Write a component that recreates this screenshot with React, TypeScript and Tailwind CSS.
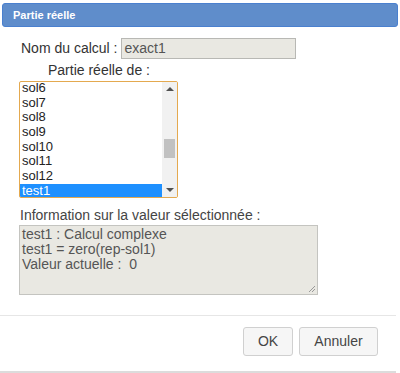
import React from 'react'

const items = ['sol6', 'sol7', 'sol8', 'sol9', 'sol10', 'sol11', 'sol12', 'test1']

const App = () => {
    return (
        <div className="w-[400px] h-[373px] bg-white relative font-['Liberation_Sans',Arial,sans-serif] text-[#333] overflow-hidden">
            <div className="mx-[2px] mt-[3px] h-[24px] rounded-[3px] border border-[#4a80cf] bg-[#5f8dcb] flex items-center px-[10px]">
                <span className="text-white text-[11px] font-bold">Partie réelle</span>
            </div>

            <div className="pl-[21px] pt-[11px] flex items-center text-[14px] text-[#333]">
                <span>Nom du calcul :</span>
                <div className="ml-[4px] w-[175px] h-[21px] bg-[#e9e8e2] border border-[#b8b8b4] flex items-center px-[2px] text-[#555]">exact1</div>
            </div>

            <div className="pl-[48px] mt-[3px] text-[14px] leading-[17px] text-[#333]">Partie réelle de :</div>

            <div className="ml-[19px] mt-[2px] w-[159px] h-[117px] border border-[#e4a94f] rounded-[2px] flex overflow-hidden">
                <div className="flex-1 flex flex-col justify-start -mt-[1px] text-[13px] text-[#222]">
                    {items.map((it, i) => (
                        <div key={i} className={`shrink-0 h-[14.7px] leading-[14.7px] pl-[2px] ${it === 'test1' ? 'bg-[#1e90ff] text-white' : ''}`}>{it}</div>
                    ))}
                </div>
                <div className="w-[15px] bg-[#f1f1f1] relative">
                    <div className="absolute top-[5px] left-[4px] w-0 h-0 border-l-[4px] border-r-[4px] border-b-[4px] border-l-transparent border-r-transparent border-b-[#505050]" />
                    <div className="absolute top-[57px] left-[2px] w-[11px] h-[19px] bg-[#c1c1c1]" />
                    <div className="absolute bottom-[5px] left-[4px] w-0 h-0 border-l-[4px] border-r-[4px] border-t-[4px] border-l-transparent border-r-transparent border-t-[#505050]" />
                </div>
            </div>

            <div className="pl-[20px] mt-[9px] text-[14px] leading-[17px] text-[#444]">Information sur la valeur sélectionnée :</div>

            <div className="ml-[19px] mt-[1px] w-[299px] h-[70px] bg-[#e9e8e2] border border-[#c4c4c0] relative text-[14px] leading-[15px] text-[#555] px-[2px] pt-[1px]">
                <div>test1 : Calcul complexe</div>
                <div>test1 = zero(rep-sol1)</div>
                <div>Valeur actuelle :&nbsp; 0</div>
                <svg className="absolute right-[1px] bottom-[1px]" width="9" height="9" viewBox="0 0 9 9">
                    <line x1="8" y1="2" x2="2" y2="8" stroke="#999" strokeWidth="1" />
                    <line x1="8" y1="5" x2="5" y2="8" stroke="#999" strokeWidth="1" />
                </svg>
            </div>

            <div className="mt-[20px] w-[396px] h-px bg-[#e6e6e6]" />

            <div className="flex justify-end gap-[6px] pr-[22px] mt-[11px]">
                <button className="w-[50px] h-[29px] bg-[#f6f6f6] border border-[#d0d0d0] rounded-[3px] text-[14px] text-[#454545]">OK</button>
                <button className="w-[79px] h-[29px] bg-[#f6f6f6] border border-[#d0d0d0] rounded-[3px] text-[14px] text-[#454545]">Annuler</button>
            </div>

            <div className="absolute left-0 bottom-0 w-[396px] h-[2px] bg-[#dcdcdc]" />
        </div>
    )
}

export default App
